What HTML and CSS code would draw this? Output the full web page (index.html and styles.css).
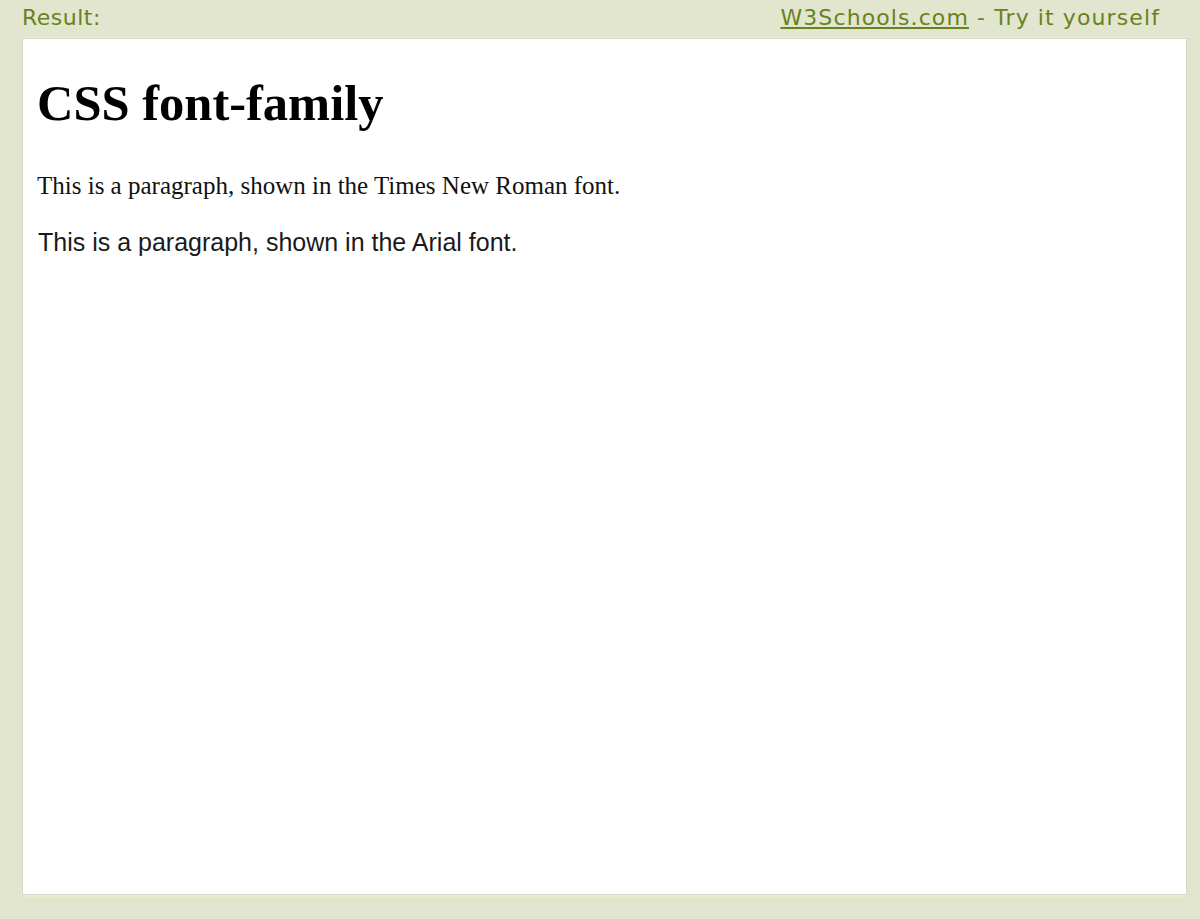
FILE: index.html
```html
<!DOCTYPE html>
<html>
<head>
<meta charset="utf-8">
<title>Result</title>
<link rel="stylesheet" href="styles.css">
</head>
<body>
<div class="header">
  <span class="label">Result:</span>
  <span class="brand"><a href="#">W3Schools.com</a> - Try it yourself</span>
</div>
<div class="result">
  <h1>CSS font-family</h1>
  <p class="serif">This is a paragraph, shown in the Times New Roman font.</p>
  <p class="sans">This is a paragraph, shown in the Arial font.</p>
</div>
</body>
</html>
```

FILE: styles.css
```css
html, body {
  margin: 0;
  padding: 0;
  background: #e3e6cf;
  height: 100%;
}
.header {
  display: flex;
  justify-content: space-between;
  align-items: center;
  height: 37px;
  padding: 0 40px 3px 22px;
  font-family: "DejaVu Sans", Verdana, sans-serif;
  font-size: 22px;
  letter-spacing: 0.5px;
  color: #688220;
  box-sizing: border-box;
}
.header .brand {
  letter-spacing: 1.1px;
}
.header a {
  color: #688220;
  text-decoration: underline;
}
.result {
  margin: 1px 13px 0 22px;
  height: 857px;
  box-sizing: border-box;
  background: #ffffff;
  border: 1px solid #d6d8cc;
  box-shadow: 0 2px 0 #e9edc6, 0 -1px 0 #e9edc6;
  padding: 0 14px;
  font-family: "Liberation Serif", "Times New Roman", serif;
  color: #111;
  overflow: hidden;
}
.result h1 {
  font-size: 50.5px;
  font-weight: bold;
  margin: 35px 0 0;
  line-height: 58px;
  color: #000;
}
.result p {
  font-size: 25px;
  margin: 0;
  line-height: 29px;
}
.result .serif {
  margin-top: 39px;
}
.result .sans {
  font-family: "Liberation Sans", Arial, sans-serif;
  color: #1a1a1a;
  margin-top: 28px;
  padding-left: 1px;
}
```
